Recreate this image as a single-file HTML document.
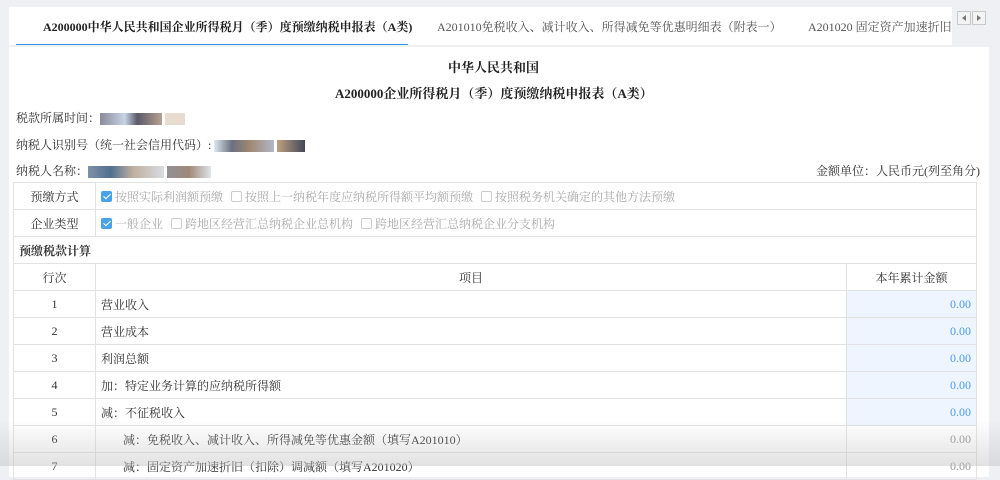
<!DOCTYPE html>
<html><head><meta charset="utf-8"><style>
*{margin:0;padding:0;box-sizing:border-box}
body{width:1000px;height:466px;overflow:hidden;background:#eff0f4;font-family:"Liberation Serif","Noto Serif CJK SC",serif;color:#333;font-size:12px;position:relative}
.tabs{position:absolute;left:9px;top:7px;width:943px;height:38px;background:#fff;overflow:hidden;white-space:nowrap}
.tab{position:absolute;top:0;height:38px;line-height:40px;font-size:12px;color:#555}
.tab.a{color:#222;font-weight:bold;border-bottom:2px solid #3a8ee6;height:39px}
.btn{position:absolute;top:11px;width:14px;height:14px;border:1px solid #c8c8c8;background:#f3f3f3}
.btn:after{content:"";position:absolute;top:3px;border:3.5px solid transparent}
.l:after{left:1px;border-right:4px solid #777}
.r:after{left:4px;border-left:4px solid #777}
.panel{position:absolute;left:9px;top:47px;width:980px;height:430px;background:#fff}
.t{position:absolute;font-weight:bold;font-size:13px;color:#222}
.info{position:absolute;left:16px;font-size:12px;color:#333}
.blur{display:inline-block;height:12px;vertical-align:middle}
table{position:absolute;left:13px;top:182px;border-collapse:collapse;width:964px}
td{border:1px solid #e2e2e2;height:27px;font-size:12px;padding:0 5px;color:#333}
.c{text-align:center}
.amt{background:#eef5ff;text-align:right;color:#4a9be8;padding-right:5px}
.amt2{text-align:right;color:#999}
.cb{display:inline-block;width:11px;height:11px;border:1px solid #ccc;border-radius:2px;vertical-align:-1px;margin-right:3px;position:relative}
.cb.on{background:#4aa3e8;border-color:#4aa3e8}
.cb.on:after{content:"";position:absolute;left:3px;top:0px;width:3px;height:6px;border:solid #fff;border-width:0 1.5px 1.5px 0;transform:rotate(45deg)}
.g{color:#aaa;margin-right:8px}
.fade{position:absolute;left:0;top:420px;width:1000px;height:46px;background:linear-gradient(rgba(200,200,200,0),rgba(190,190,190,.45))}
</style></head><body>
<div class="tabs">
<div class="tab a" style="left:7px;width:392px;padding-left:27px">A200000中华人民共和国企业所得税月（季）度预缴纳税申报表（A类)</div>
<div class="tab" style="left:428px">A201010免税收入、减计收入、所得减免等优惠明细表（附表一）</div>
<div class="tab" style="left:799px">A201020 固定资产加速折旧(扣</div>
</div>
<div class="btn l" style="left:957px"></div><div class="btn r" style="left:972px"></div>
<div class="panel"></div>
<div class="t" style="left:448px;top:57px">中华人民共和国</div>
<div class="t" style="left:335px;top:83px">A200000企业所得税月（季）度预缴纳税申报表（A类）</div>
<div class="info" style="top:109px">税款所属时间：<span class="blur" style="width:62px;background:linear-gradient(90deg,#8a8a9a,#c8d4e4 40%,#5a5a6a 60%,#b8a090)"></span> <span class="blur" style="width:20px;background:#e8dcd0"></span></div>
<div class="info" style="top:136px">纳税人识别号（统一社会信用代码）: <span class="blur" style="width:60px;background:linear-gradient(90deg,#dde8f0,#6a7080 30%,#a08870 60%,#b0b8c8)"></span> <span class="blur" style="width:28px;background:linear-gradient(90deg,#c0a080,#404858)"></span></div>
<div class="info" style="top:162px">纳税人名称：<span class="blur" style="width:76px;background:linear-gradient(90deg,#8090a8,#507090 30%,#c0b0a0 60%,#d8dce4)"></span> <span class="blur" style="width:44px;background:linear-gradient(90deg,#909098,#a08878,#e0e4ea)"></span></div>
<div class="info" style="left:816px;top:162px">金额单位：人民币元(列至角分)</div>
<table>
<tr><td class="c" style="width:82px">预缴方式</td><td colspan="2"><span class="cb on"></span><span class="g">按照实际利润额预缴</span><span class="cb"></span><span class="g">按照上一纳税年度应纳税所得额平均额预缴</span><span class="cb"></span><span class="g">按照税务机关确定的其他方法预缴</span></td></tr>
<tr><td class="c">企业类型</td><td colspan="2"><span class="cb on"></span><span class="g">一般企业</span><span class="cb"></span><span class="g">跨地区经营汇总纳税企业总机构</span><span class="cb"></span><span class="g">跨地区经营汇总纳税企业分支机构</span></td></tr>
<tr><td colspan="3" style="font-weight:bold">预缴税款计算</td></tr>
<tr><td class="c">行次</td><td class="c" style="width:751px">项目</td><td class="c">本年累计金额</td></tr>
<tr><td class="c">1</td><td>营业收入</td><td class="amt">0.00</td></tr>
<tr><td class="c">2</td><td>营业成本</td><td class="amt">0.00</td></tr>
<tr><td class="c">3</td><td>利润总额</td><td class="amt">0.00</td></tr>
<tr><td class="c">4</td><td>加：特定业务计算的应纳税所得额</td><td class="amt">0.00</td></tr>
<tr><td class="c">5</td><td>减：不征税收入</td><td class="amt">0.00</td></tr>
<tr><td class="c">6</td><td style="padding-left:27px">减：免税收入、减计收入、所得减免等优惠金额（填写A201010）</td><td class="amt2">0.00</td></tr>
<tr><td class="c">7</td><td style="padding-left:27px">减：固定资产加速折旧（扣除）调减额（填写A201020）</td><td class="amt2">0.00</td></tr>
</table>
<div class="fade"></div>
</body></html>
